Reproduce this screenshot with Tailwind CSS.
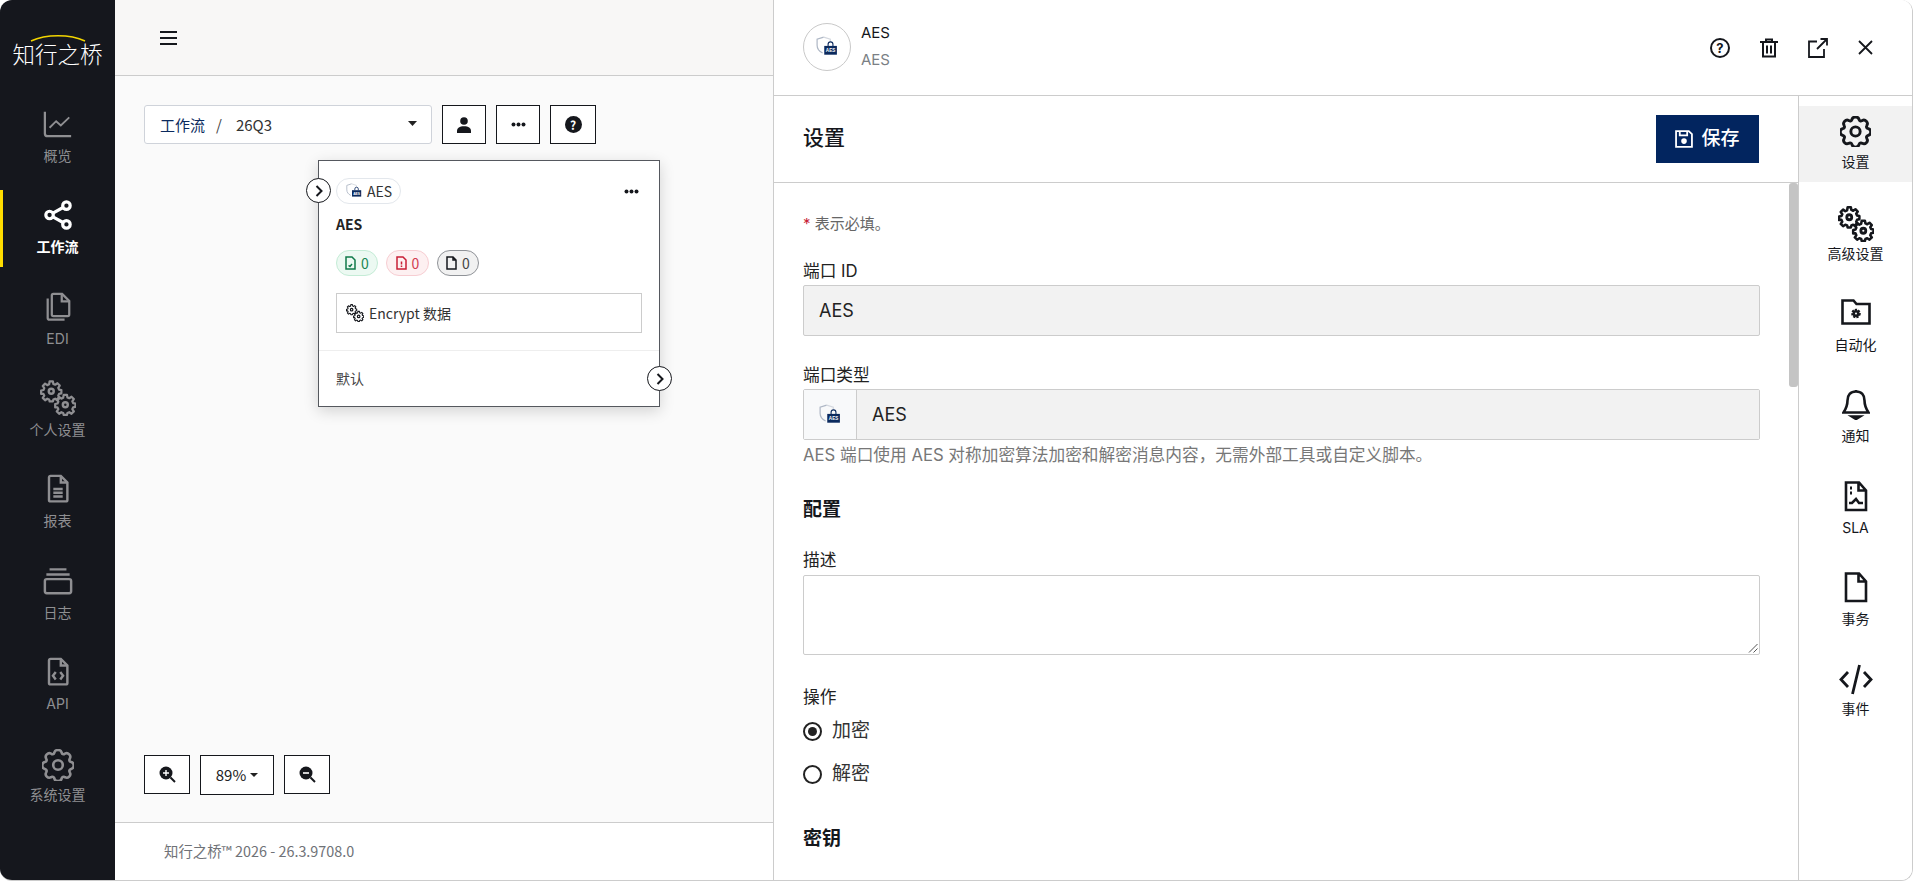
<!DOCTYPE html>
<html lang="zh">
<head>
  <meta charset="UTF-8" />
  <title>知行之桥 - 工作流</title>
  <script src="https://cdn.jsdelivr.net/npm/@tailwindcss/browser@4"></script>
</head>
<body class="bg-white overflow-hidden font-['Inter','Noto_Sans_CJK_SC',sans-serif] text-[#15171c]">

  <!-- shared icons -->
  <svg class="hidden">
    <symbol id="i-gear" viewBox="0 0 16 16">
      <g fill="none" stroke="currentColor">
        <circle cx="8" cy="8" r="2.4"/>
        <path d="M9.800 1.700c-.5-1.600-3.100-1.600-3.600 0l-.1.300a.9.900 0 0 1-1.300.5l-.3-.2c-1.500-.8-3.300 1-2.400 2.500l.1.300a.9.900 0 0 1-.5 1.300l-.3.100c-1.700.5-1.700 3 0 3.500l.3.100a.9.900 0 0 1 .5 1.300l-.1.300c-.9 1.500.9 3.300 2.400 2.400l.3-.1a.9.900 0 0 1 1.300.5l.1.300c.5 1.700 3.100 1.700 3.600 0l.1-.3a.9.900 0 0 1 1.300-.5l.3.100c1.500.9 3.300-.9 2.400-2.400l-.1-.3a.9.900 0 0 1 .5-1.300l.3-.1c1.700-.5 1.700-3 0-3.500l-.3-.1a.9.900 0 0 1-.5-1.300l.1-.3c.9-1.500-.9-3.300-2.400-2.500l-.3.2a.9.900 0 0 1-1.300-.5z"/>
      </g>
    </symbol>
    <symbol id="i-gears" viewBox="0 0 32 32">
      <g fill="none" stroke="currentColor" stroke-linejoin="round">
        <circle cx="10" cy="10" r="2.200"/>
        <path d="M8.400 1.500h3.200l.5 2.600 1.800.8 2.200-1.500 2.300 2.300-1.500 2.200.8 1.800 2.300.5v3.200l-2.300.5-.8 1.800 1.500 2.200-2.300 2.300-2.200-1.500-1.800.8-.5 1.900H8.400l-.5-2-1.800-.7-2.200 1.500-2.300-2.300 1.500-2.200-.8-1.800L0 14v-3.400l2.300-.5.8-1.800-1.500-2.200L3.900 3.800l2.200 1.500 1.800-.8z" transform="translate(1 -.2) scale(.9)"/>
        <g transform="translate(12.500 12)">
          <circle cx="10" cy="10" r="2.200"/>
          <path d="M8.400 1.500h3.200l.5 2.600 1.800.8 2.200-1.500 2.300 2.300-1.500 2.200.8 1.800 2.300.5v3.200l-2.300.5-.8 1.800 1.500 2.200-2.300 2.300-2.200-1.500-1.800.8-.5 1.900H8.400l-.5-2-1.800-.7-2.200 1.500-2.300-2.300 1.500-2.200-.8-1.800L0 14v-3.400l2.300-.5.800-1.800-1.500-2.200L3.900 3.800l2.200 1.500 1.800-.8z" transform="translate(1 -.2) scale(.9)"/>
        </g>
      </g>
    </symbol>
    <symbol id="i-aes" viewBox="0 0 20 20">
      <path d="M7 1 1 3v5.500c0 3 1.800 5.500 5 7" fill="none" stroke="#aeb7c5" stroke-width="1.100"/>
      <path d="M7 1l6 2v2" fill="none" stroke="#d4d8df" stroke-width="1.100"/>
      <path d="M11 9V7.500a2.200 2.200 0 0 1 4.400 0V9" fill="none" stroke="#0b2a5e" stroke-width="1"/>
      <rect x="7.500" y="9" width="11.500" height="8" fill="#0b2a5e"/>
      <text x="13.250" y="14.600" text-anchor="middle" font-size="4.200" font-weight="700" fill="#fff" font-family="Liberation Sans">AES</text>
    </symbol>
  </svg>

  <div class="w-[1913px] h-[881px] flex rounded-[12px] overflow-hidden border-r border-b border-[#cccccc]">

    <!-- Sidebar -->
    <aside class="w-[115px] shrink-0 bg-[#15171d] flex flex-col text-[#8f8f92]">
      <div class="h-[98px] flex items-start justify-center pt-[34px] relative">
        <svg class="absolute left-[30px] top-[34px]" width="56" height="8" viewBox="0 0 56 8"><path d="M1 7C16 0 40 0 55 7" fill="none" stroke="#f2d500" stroke-width="1.500"/></svg>
        <span class="text-[22.500px] leading-[36px] font-light text-white font-['Noto_Sans_CJK_SC',sans-serif] mt-[1px]">知行之桥</span>
      </div>
      <nav class="flex flex-col gap-[14.500px] text-[14px] leading-[20px]">
        <a class="h-[77px] flex flex-col items-center justify-center gap-[7px] pt-[1px]">
          <svg class="w-[30px] h-[30px]" viewBox="0 0 16 16" fill="none" stroke="currentColor" stroke-width="1.200"><path d="M1 1.500V13a1.500 1.500 0 0 0 1.500 1.500H15"/><path d="M3.500 10 7 6.500l2.500 2.300L14 4.500" stroke-width="1"/></svg>
          <span>概览</span>
        </a>
        <a class="h-[77px] flex flex-col items-center justify-center gap-[7px] text-white font-bold border-l-[3px] border-[#ffdd00] pr-[3px]">
          <svg class="w-[30px] h-[30px]" viewBox="0 0 16 16" fill="none" stroke="currentColor" stroke-width="1.700"><circle cx="12.500" cy="3" r="2"/><circle cx="12.500" cy="13" r="2"/><circle cx="3.500" cy="8" r="2"/><path d="m5.300 7 5.400-3M5.300 9l5.400 3"/></svg>
          <span>工作流</span>
        </a>
        <a class="h-[77px] flex flex-col items-center justify-center gap-[7px] pt-[1px]">
          <svg class="w-[30px] h-[30px]" viewBox="0 0 16 16" fill="none" stroke="currentColor" stroke-width="1.200"><path d="M5.500 1h4.700L14 4.800V12a.8.800 0 0 1-.8.800H5.500a.8.800 0 0 1-.8-.8V1.800a.8.800 0 0 1 .8-.8z"/><path d="M10 1v4h4"/><path d="M2.500 3.500v10.300c0 .5.400.9.900.9h8.100"/></svg>
          <span>EDI</span>
        </a>
        <a class="h-[77px] flex flex-col items-center justify-center gap-[7px]">
          <svg class="w-[36px] h-[36px] -my-[3px]" stroke-width="2.200"><use href="#i-gears"/></svg>
          <span>个人设置</span>
        </a>
        <a class="h-[77px] flex flex-col items-center justify-center gap-[7px]">
          <svg class="w-[30px] h-[30px]" viewBox="0 0 16 16" fill="none" stroke="currentColor" stroke-width="1.300"><path d="M4 1h5.500L13 4.500v9.300a.8.800 0 0 1-.8.800H4a.8.800 0 0 1-.8-.8V1.800A.8.800 0 0 1 4 1z"/><path d="M9.500 1v3.500H13M5.500 8h5M5.500 10h5M5.500 12h5"/></svg>
          <span>报表</span>
        </a>
        <a class="h-[77px] flex flex-col items-center justify-center gap-[7px]">
          <svg class="w-[30px] h-[30px]" viewBox="0 0 16 16" fill="none" stroke="currentColor" stroke-width="1.300"><path d="M3.500 1.800h9M1.800 4.500h12.400"/><rect x="1" y="7" width="14" height="7.500" rx="1"/></svg>
          <span>日志</span>
        </a>
        <a class="h-[77px] flex flex-col items-center justify-center gap-[7px]">
          <svg class="w-[30px] h-[30px]" viewBox="0 0 16 16" fill="none" stroke="currentColor" stroke-width="1.300"><path d="M4 1h5.500L13 4.500v9.300a.8.800 0 0 1-.8.800H4a.8.800 0 0 1-.8-.8V1.800A.8.800 0 0 1 4 1z"/><path d="M9.500 1v3.500H13M6.800 8 5.300 10l1.500 2M9.200 8l1.500 2-1.500 2"/></svg>
          <span>API</span>
        </a>
        <a class="h-[77px] flex flex-col items-center justify-center gap-[5px]">
          <svg class="w-[32px] h-[32px] -my-[1px]" stroke-width="1.300"><use href="#i-gear"/></svg>
          <span>系统设置</span>
        </a>
      </nav>
    </aside>

    <!-- Workflow canvas -->
    <main class="w-[659px] shrink-0 flex flex-col bg-[#fafafa] font-['Noto_Sans_CJK_SC',sans-serif] border-r border-[#cccccc]">
      <div class="h-[76px] shrink-0 bg-[#f8f7f6] border-b border-[#cccccc] flex items-center pl-[45px]">
        <svg width="17" height="16" viewBox="0 0 17 16" stroke="#15171c" stroke-width="2"><path d="M0 2h17M0 8h17M0 14h17"/></svg>
      </div>
      <div class="relative flex-1 pl-[29px] pt-[29px]">
        <div class="flex gap-[10px] h-[39px]">
          <div class="w-[288px] bg-white border border-[#cfd3da] rounded-[3px] flex items-center pl-[15px] pr-[14px] text-[15px]">
            <span class="text-[#0b2a5e] mt-[1px]">工作流</span>
            <span class="mx-[11px] text-[#444] mt-[1px]">/</span>
            <span class="ml-[3px] text-[#333] mt-[1px]">26Q3</span>
            <svg class="ml-auto -mt-[3px]" width="9" height="5" viewBox="0 0 9 5"><path d="M0 0h9L4.500 5z" fill="#222"/></svg>
          </div>
          <button class="w-[44px] bg-white border border-[#15171c] flex items-center justify-center">
            <svg width="14" height="16" viewBox="0 0 14 16" fill="#15171c"><circle cx="7" cy="4" r="3.800"/><path d="M0 16v-2c0-3 2.500-4.700 7-4.700s7 1.700 7 4.700v2z"/></svg>
          </button>
          <button class="w-[44px] bg-white border border-[#15171c] flex items-center justify-center">
            <svg width="15" height="5" viewBox="0 0 15 5" fill="#15171c"><circle cx="2.500" cy="2.500" r="2"/><circle cx="7.500" cy="2.500" r="2"/><circle cx="12.500" cy="2.500" r="2"/></svg>
          </button>
          <button class="w-[46px] bg-white border border-[#15171c] flex items-center justify-center">
            <span class="w-[17px] h-[17px] rounded-full bg-[#15171c] text-white text-[12px] leading-[17px] font-bold text-center">?</span>
          </button>
        </div>

        <!-- Workflow node -->
        <div class="absolute left-[203px] top-[84px] w-[342px] h-[247px] bg-white border border-[#55585e] shadow-[0_4px_14px_rgba(0,0,0,0.16)]">
          <span class="absolute -left-[13px] top-[17px] w-[25px] h-[25px] rounded-full bg-white border border-[#15171c] flex items-center justify-center">
            <svg width="8" height="12" viewBox="0 0 8 12" fill="none" stroke="#15171c" stroke-width="2"><path d="m1.500 1 5 5-5 5"/></svg>
          </span>
          <span class="absolute -right-[13px] top-[205px] w-[25px] h-[25px] rounded-full bg-white border border-[#15171c] flex items-center justify-center">
            <svg width="8" height="12" viewBox="0 0 8 12" fill="none" stroke="#15171c" stroke-width="2"><path d="m1.500 1 5 5-5 5"/></svg>
          </span>
          <div class="h-[190px] border-b border-[#eeeeee] px-[17px] pt-[17px]">
            <div class="flex items-center justify-between">
              <span class="h-[26px] w-[65px] rounded-full border border-[#e3e7ec] flex items-center pl-[9px] gap-[5px] text-[14px] text-[#333]">
                <svg class="w-[16px] h-[16px]"><use href="#i-aes"/></svg>AES
              </span>
              <svg class="mr-[3px]" width="15" height="5" viewBox="0 0 15 5" fill="#15171c"><circle cx="2.500" cy="2.500" r="2"/><circle cx="7.500" cy="2.500" r="2"/><circle cx="12.500" cy="2.500" r="2"/></svg>
            </div>
            <div class="mt-[10px] text-[14px] leading-[20px] font-bold text-[#222]">AES</div>
            <div class="flex gap-[8px] mt-[16px] text-[14px] leading-none">
              <span class="h-[26px] w-[42px] rounded-full border border-[#c4ecd6] bg-[#ecf9f2] text-[#198754] flex items-center justify-center gap-[5px]">
                <svg width="11" height="14" viewBox="0 0 11 14" fill="none" stroke="#0f7a4a" stroke-width="1.500"><path d="M1 1h6l3 3v9H1zM3.500 9.500l1.500 1 2-2.500"/></svg>0
              </span>
              <span class="h-[26px] w-[43px] rounded-full border border-[#f7cdd2] bg-[#fdf0f1] text-[#d23c4f] flex items-center justify-center gap-[5px]">
                <svg width="11" height="14" viewBox="0 0 11 14" fill="none" stroke="#c81e36" stroke-width="1.500"><path d="M1 1h6l3 3v9H1zM5.500 5.500v3M5.500 9.500v1.500"/></svg>0
              </span>
              <span class="h-[26px] w-[42px] rounded-full border border-[#8f9297] bg-[#f1f1f1] text-[#444] flex items-center justify-center gap-[5px]">
                <svg width="11" height="14" viewBox="0 0 11 14" fill="none" stroke="#15171c" stroke-width="1.500"><path d="M1 1h6l3 3v9H1zM7 1v3h3"/></svg>0
              </span>
            </div>
            <div class="mt-[17px] h-[40px] border border-[#cccccc] flex items-center pl-[9px] gap-[5px] text-[14px] text-[#333]">
              <svg class="w-[18px] h-[18px] text-[#15171c]" stroke-width="2.200"><use href="#i-gears"/></svg>Encrypt 数据
            </div>
          </div>
          <div class="pl-[17px] pt-[17px] text-[14px] leading-[20px] text-[#444]">默认</div>
        </div>

        <!-- Zoom controls -->
        <div class="absolute left-[29px] top-[679px] flex gap-[10px] h-[39px]">
          <button class="w-[46px] h-[39px] bg-white border border-[#15171c] flex items-center justify-center">
            <svg width="17" height="17" viewBox="0 0 17 17"><circle cx="7" cy="7" r="6.500" fill="#15171c"/><path d="M11.500 11.500 16 16" stroke="#15171c" stroke-width="2"/><path d="M7 4v6M4 7h6" stroke="#fff" stroke-width="1.400"/></svg>
          </button>
          <button class="w-[74px] h-[40px] bg-white border border-[#15171c] flex items-center justify-center gap-[4px] text-[15px] text-[#222]">
            89%<svg width="8" height="4" viewBox="0 0 8 4"><path d="M0 0h8L4 4z" fill="#222"/></svg>
          </button>
          <button class="w-[46px] h-[39px] bg-white border border-[#15171c] flex items-center justify-center">
            <svg width="17" height="17" viewBox="0 0 17 17"><circle cx="7" cy="7" r="6.500" fill="#15171c"/><path d="M11.500 11.500 16 16" stroke="#15171c" stroke-width="2"/><path d="M4 7h6" stroke="#fff" stroke-width="1.600"/></svg>
          </button>
        </div>
      </div>
      <footer class="h-[58px] shrink-0 bg-white border-t border-[#cccccc] flex items-center pl-[49px] text-[14.400px] text-[#6f7277] pb-[1px]">知行之桥™ 2026 - 26.3.9708.0</footer>
    </main>

    <!-- Port detail panel -->
    <section class="flex-1 min-w-0 flex flex-col bg-white">
      <header class="h-[96px] shrink-0 border-b border-[#cccccc] flex items-center pl-[29px] pr-[39px]">
        <span class="w-[48px] h-[48px] rounded-full border border-[#c9c9c9] flex items-center justify-center -mt-[1px]">
          <svg class="w-[22px] h-[22px]"><use href="#i-aes"/></svg>
        </span>
        <div class="ml-[10px] text-[15px] leading-[27px] -mt-[3px]">
          <div class="text-[#15171c]">AES</div>
          <div class="text-[#7b7f85]">AES</div>
        </div>
        <div class="ml-auto flex items-center gap-[30px] text-[#15171c]">
          <span class="w-[20px] h-[20px] rounded-full border-2 border-[#15171c] text-[13px] leading-[16px] font-bold text-center">?</span>
          <svg width="18" height="20" viewBox="0 0 18 20" fill="none" stroke="#15171c" stroke-width="2"><path d="M0 4h18M6 4V1.500h6V4M3 4v14.500h12V4M7 7.500v8M11 7.500v8"/></svg>
          <svg width="20" height="20" viewBox="0 0 20 20" fill="none" stroke="#15171c" stroke-width="1.800"><path d="M9 3.500H1v15.500h15v-8M19 1 9 11M12.500 1H19v6.500"/></svg>
          <svg width="15" height="15" viewBox="0 0 15 15" fill="none" stroke="#15171c" stroke-width="1.800"><path d="m1 1 13 13M14 1 1 14"/></svg>
        </div>
      </header>
      <div class="flex-1 min-h-0 flex">
        <div class="w-[1025px] shrink-0 flex flex-col border-r border-[#cccccc]">
          <div class="h-[87px] shrink-0 border-b border-[#cccccc] flex items-center justify-between pl-[29px] pr-[39px]">
            <h2 class="text-[21px] font-medium -mt-[2px]">设置</h2>
            <button class="w-[103px] h-[48px] bg-[#02255f] text-white flex items-center justify-center gap-[8px] text-[19px] font-medium">
              <svg width="18" height="18" viewBox="0 0 17 17" fill="none" stroke="#fff" stroke-width="1.700"><path d="M1 1h12l3 3v12H1zM4.500 1v4h7V1"/><circle cx="8.500" cy="10.500" r="1.800" fill="#fff"/></svg>保存
            </button>
          </div>
          <div class="relative flex-1 overflow-hidden pl-[29px] pr-[38px] pt-[30px] text-[16.700px] leading-[24px]">
            <span class="absolute right-0 top-0 w-[9px] h-[204px] bg-[#c4c4c4] rounded-[3px]"></span>
            <p class="text-[15px] leading-[22px] text-[#666]"><span class="text-[#c81e36]">*</span> 表示必填。</p>
            <label class="block mt-[24px] leading-[24px] text-[#222]">端口 ID</label>
            <div class="mt-[2px] h-[51px] bg-[#f2f2f2] border border-[#cccccc] rounded-[2px] flex items-center pl-[15px] text-[18px] text-[#222]">AES</div>
            <label class="block mt-[27px] text-[#222]">端口类型</label>
            <div class="mt-[2px] h-[51px] border border-[#cccccc] rounded-[2px] flex text-[18px] text-[#222]">
              <span class="w-[53px] bg-[#f8f9fa] border-r border-[#cccccc] flex items-center justify-center">
                <svg class="w-[22px] h-[22px]"><use href="#i-aes"/></svg>
              </span>
              <span class="flex-1 bg-[#f2f2f2] flex items-center pl-[15px]">AES</span>
            </div>
            <p class="mt-[3px] text-[#777]">AES 端口使用 AES 对称加密算法加密和解密消息内容，无需外部工具或自定义脚本。</p>
            <h3 class="mt-[29px] text-[19px] leading-[28px] font-semibold">配置</h3>
            <label class="block mt-[24px] text-[#222]">描述</label>
            <div class="relative mt-[3px] h-[80px] border border-[#cccccc] rounded-[2px]">
              <svg class="absolute right-[1px] bottom-[1px]" width="10" height="10" viewBox="0 0 10 10" stroke="#555" fill="none"><path d="M9.500 1 1 9.500M9.500 5.500 5.500 9.500"/></svg>
            </div>
            <label class="block mt-[30px] text-[#222]">操作</label>
            <div class="mt-[8px] flex items-center gap-[10px] h-[28px] text-[19px] text-[#333]">
              <span class="w-[19px] h-[19px] rounded-full border-2 border-[#222] flex items-center justify-center"><span class="w-[9px] h-[9px] rounded-full bg-[#222]"></span></span>加密
            </div>
            <div class="mt-[15px] flex items-center gap-[10px] h-[28px] text-[19px] text-[#333]">
              <span class="w-[19px] h-[19px] rounded-full border-2 border-[#222]"></span>解密
            </div>
            <h3 class="mt-[37px] text-[19px] leading-[28px] font-semibold">密钥</h3>
          </div>
        </div>

        <!-- Panel tabs -->
        <nav class="flex-1 pt-[10px] flex flex-col gap-[15.500px] text-[14px] leading-[20px] text-[#15171c]">
          <a class="h-[76px] bg-[#f2f2f2] flex flex-col items-center justify-center gap-[5px]">
            <svg class="w-[31px] h-[31px]" stroke-width="1.500"><use href="#i-gear"/></svg><span>设置</span>
          </a>
          <a class="h-[76px] flex flex-col items-center justify-center gap-[2px] -mt-[1px]">
            <svg class="w-[36px] h-[36px]" stroke-width="2.500"><use href="#i-gears"/></svg><span>高级设置</span>
          </a>
          <a class="h-[76px] flex flex-col items-center justify-center gap-[9px]">
            <svg class="w-[30px] h-[28px]" viewBox="0 0 30 28" fill="none" stroke="currentColor" stroke-width="2.600"><path d="M1.500 2.500h11l3 3.500h13v19.500h-27z"/><circle cx="15" cy="15.500" r="3.500" fill="currentColor" stroke-dasharray="2 1"/><circle cx="15" cy="15.500" r="1" fill="#fff" stroke="none"/></svg>
            <span>自动化</span>
          </a>
          <a class="h-[76px] flex flex-col items-center justify-center gap-[6px]">
            <svg class="w-[28px] h-[31px]" viewBox="0 0 28 31" fill="none" stroke="currentColor" stroke-width="2.600"><path d="M14 2.500c-5.500 0-8.500 3.500-8.500 9 0 6-2 9-4 12h25c-2-3-4-6-4-12 0-5.500-3-9-8.500-9zM14 1v2"/><path d="M10 27.500h8l-4 2.500z" fill="currentColor"/></svg>
            <span>通知</span>
          </a>
          <a class="h-[76px] flex flex-col items-center justify-center gap-[6px]">
            <svg class="w-[24px] h-[31px]" viewBox="0 0 24 31" fill="none" stroke="currentColor" stroke-width="2.600"><path d="M2 1.500h13l7 8v19.500H2zM14.500 1.500v8H22"/><path d="M6 7h2M6 12h2" stroke-width="3"/><path d="M5 22h3l4-4 3 4h4" stroke-width="2.500"/></svg>
            <span>SLA</span>
          </a>
          <a class="h-[76px] flex flex-col items-center justify-center gap-[6px]">
            <svg class="w-[24px] h-[31px]" viewBox="0 0 24 31" fill="none" stroke="currentColor" stroke-width="2.600"><path d="M2 1.500h13l7 8v19.500H2zM14.500 1.500v8H22"/></svg>
            <span>事务</span>
          </a>
          <a class="h-[76px] flex flex-col items-center justify-center gap-[3px] -mt-[1px]">
            <svg class="w-[34px] h-[33px]" viewBox="0 0 34 31" fill="none" stroke="currentColor" stroke-width="2.800"><path d="M9 8 2 15.500 9 23M25 8l7 7.500-7 7.500M20.500 1l-7 29"/></svg>
            <span>事件</span>
          </a>
        </nav>
      </div>
    </section>
  </div>
</body>
</html>
